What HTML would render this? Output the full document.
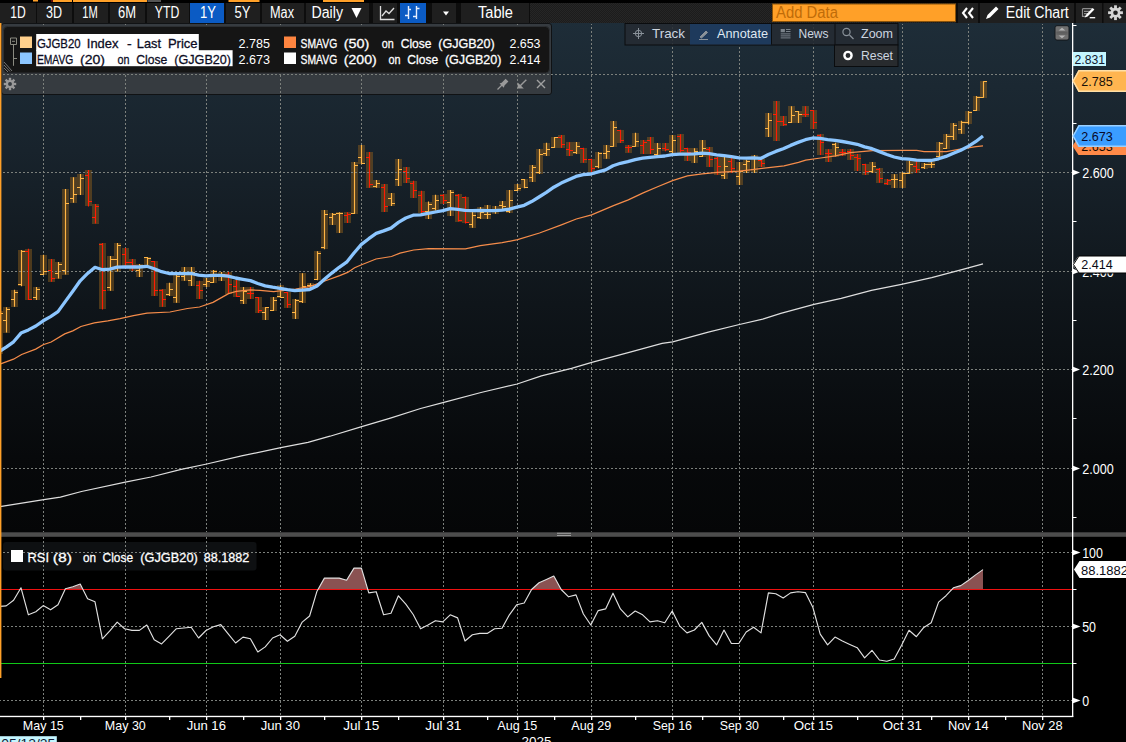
<!DOCTYPE html><html><head><meta charset="utf-8"><title>chart</title><style>html,body{margin:0;padding:0;background:#000;overflow:hidden}svg{display:block}</style></head><body><svg width="1126" height="742" viewBox="0 0 1126 742" font-family="Liberation Sans, sans-serif" shape-rendering="auto">
<defs>
<linearGradient id="bg" x1="0" y1="0" x2="0" y2="1">
<stop offset="0" stop-color="#1e2d38"/><stop offset="0.25" stop-color="#18232c"/><stop offset="0.55" stop-color="#0f151a"/><stop offset="0.85" stop-color="#07090b"/><stop offset="1" stop-color="#050607"/>
</linearGradient>
<pattern id="tex" width="2" height="2" patternUnits="userSpaceOnUse"><rect width="2" height="2" fill="#1c1c1c"/><rect width="1" height="1" fill="#262626"/><rect x="1" y="1" width="1" height="1" fill="#262626"/></pattern>
<clipPath id="cp"><rect x="0" y="23" width="1072" height="511"/></clipPath>
<clipPath id="rp"><rect x="0" y="537" width="1072" height="180"/></clipPath>
</defs>
<rect width="1126" height="742" fill="#000"/>
<rect x="0" y="23" width="1072" height="511" fill="url(#bg)"/>
<rect x="1073" y="23" width="53" height="511" fill="url(#bg)"/>
<rect x="1.5" y="23.5" width="550" height="71" rx="2.5" fill="#363b40" stroke="#101214" stroke-width="1"/>
<g clip-path="url(#cp)">
<rect x="-4" y="311.0" width="7" height="42.5" fill="#8a5c1c" fill-opacity="0.5" shape-rendering="crispEdges"/>
<rect x="3" y="307.2" width="7" height="25.4" fill="#8a5c1c" fill-opacity="0.5" shape-rendering="crispEdges"/>
<rect x="11" y="289.8" width="7" height="17.0" fill="#8a5c1c" fill-opacity="0.5" shape-rendering="crispEdges"/>
<rect x="18" y="250.0" width="7" height="36.3" fill="#8a5c1c" fill-opacity="0.5" shape-rendering="crispEdges"/>
<rect x="25" y="248.8" width="7" height="51.2" fill="#8a5c1c" fill-opacity="0.5" shape-rendering="crispEdges"/>
<rect x="33" y="287.0" width="7" height="13.0" fill="#8a5c1c" fill-opacity="0.5" shape-rendering="crispEdges"/>
<rect x="40" y="254.7" width="7" height="20.3" fill="#8a5c1c" fill-opacity="0.5" shape-rendering="crispEdges"/>
<rect x="48" y="259.0" width="7" height="22.8" fill="#8a5c1c" fill-opacity="0.5" shape-rendering="crispEdges"/>
<rect x="55" y="262.0" width="7" height="16.6" fill="#8a5c1c" fill-opacity="0.5" shape-rendering="crispEdges"/>
<rect x="62" y="189.0" width="7" height="85.6" fill="#8a5c1c" fill-opacity="0.5" shape-rendering="crispEdges"/>
<rect x="70" y="177.2" width="7" height="25.5" fill="#8a5c1c" fill-opacity="0.5" shape-rendering="crispEdges"/>
<rect x="77" y="174.0" width="7" height="21.0" fill="#8a5c1c" fill-opacity="0.5" shape-rendering="crispEdges"/>
<rect x="85" y="170.0" width="7" height="36.4" fill="#8a5c1c" fill-opacity="0.5" shape-rendering="crispEdges"/>
<rect x="92" y="204.0" width="7" height="19.6" fill="#8a5c1c" fill-opacity="0.5" shape-rendering="crispEdges"/>
<rect x="99" y="243.0" width="7" height="66.4" fill="#8a5c1c" fill-opacity="0.5" shape-rendering="crispEdges"/>
<rect x="107" y="256.0" width="7" height="34.8" fill="#8a5c1c" fill-opacity="0.5" shape-rendering="crispEdges"/>
<rect x="114" y="243.0" width="7" height="28.6" fill="#8a5c1c" fill-opacity="0.5" shape-rendering="crispEdges"/>
<rect x="122" y="248.0" width="7" height="18.0" fill="#8a5c1c" fill-opacity="0.5" shape-rendering="crispEdges"/>
<rect x="129" y="259.0" width="7" height="11.7" fill="#8a5c1c" fill-opacity="0.5" shape-rendering="crispEdges"/>
<rect x="136" y="264.0" width="7" height="13.0" fill="#8a5c1c" fill-opacity="0.5" shape-rendering="crispEdges"/>
<rect x="144" y="257.0" width="7" height="10.3" fill="#8a5c1c" fill-opacity="0.5" shape-rendering="crispEdges"/>
<rect x="151" y="261.0" width="7" height="35.0" fill="#8a5c1c" fill-opacity="0.5" shape-rendering="crispEdges"/>
<rect x="159" y="289.2" width="7" height="17.6" fill="#8a5c1c" fill-opacity="0.5" shape-rendering="crispEdges"/>
<rect x="166" y="282.8" width="7" height="13.2" fill="#8a5c1c" fill-opacity="0.5" shape-rendering="crispEdges"/>
<rect x="173" y="275.0" width="7" height="27.8" fill="#8a5c1c" fill-opacity="0.5" shape-rendering="crispEdges"/>
<rect x="181" y="267.0" width="7" height="13.8" fill="#8a5c1c" fill-opacity="0.5" shape-rendering="crispEdges"/>
<rect x="188" y="267.0" width="7" height="19.0" fill="#8a5c1c" fill-opacity="0.5" shape-rendering="crispEdges"/>
<rect x="196" y="280.8" width="7" height="18.2" fill="#8a5c1c" fill-opacity="0.5" shape-rendering="crispEdges"/>
<rect x="203" y="278.0" width="7" height="9.0" fill="#8a5c1c" fill-opacity="0.5" shape-rendering="crispEdges"/>
<rect x="210" y="270.0" width="7" height="13.0" fill="#8a5c1c" fill-opacity="0.5" shape-rendering="crispEdges"/>
<rect x="218" y="272.0" width="7" height="9.0" fill="#8a5c1c" fill-opacity="0.5" shape-rendering="crispEdges"/>
<rect x="225" y="272.0" width="7" height="21.6" fill="#8a5c1c" fill-opacity="0.5" shape-rendering="crispEdges"/>
<rect x="233" y="280.0" width="7" height="17.0" fill="#8a5c1c" fill-opacity="0.5" shape-rendering="crispEdges"/>
<rect x="240" y="287.0" width="7" height="17.0" fill="#8a5c1c" fill-opacity="0.5" shape-rendering="crispEdges"/>
<rect x="247" y="287.0" width="7" height="12.0" fill="#8a5c1c" fill-opacity="0.5" shape-rendering="crispEdges"/>
<rect x="255" y="297.0" width="7" height="16.0" fill="#8a5c1c" fill-opacity="0.5" shape-rendering="crispEdges"/>
<rect x="262" y="307.0" width="7" height="13.0" fill="#8a5c1c" fill-opacity="0.5" shape-rendering="crispEdges"/>
<rect x="270" y="297.0" width="7" height="14.0" fill="#8a5c1c" fill-opacity="0.5" shape-rendering="crispEdges"/>
<rect x="277" y="285.3" width="7" height="12.5" fill="#8a5c1c" fill-opacity="0.5" shape-rendering="crispEdges"/>
<rect x="284" y="292.0" width="7" height="15.8" fill="#8a5c1c" fill-opacity="0.5" shape-rendering="crispEdges"/>
<rect x="292" y="299.0" width="7" height="20.0" fill="#8a5c1c" fill-opacity="0.5" shape-rendering="crispEdges"/>
<rect x="299" y="273.2" width="7" height="29.8" fill="#8a5c1c" fill-opacity="0.5" shape-rendering="crispEdges"/>
<rect x="307" y="283.2" width="7" height="5.3" fill="#8a5c1c" fill-opacity="0.5" shape-rendering="crispEdges"/>
<rect x="314" y="251.2" width="7" height="29.1" fill="#8a5c1c" fill-opacity="0.5" shape-rendering="crispEdges"/>
<rect x="321" y="210.0" width="7" height="39.2" fill="#8a5c1c" fill-opacity="0.5" shape-rendering="crispEdges"/>
<rect x="329" y="212.9" width="7" height="12.2" fill="#8a5c1c" fill-opacity="0.5" shape-rendering="crispEdges"/>
<rect x="336" y="212.2" width="7" height="20.8" fill="#8a5c1c" fill-opacity="0.5" shape-rendering="crispEdges"/>
<rect x="344" y="212.2" width="7" height="10.8" fill="#8a5c1c" fill-opacity="0.5" shape-rendering="crispEdges"/>
<rect x="351" y="162.0" width="7" height="52.0" fill="#8a5c1c" fill-opacity="0.5" shape-rendering="crispEdges"/>
<rect x="358" y="144.9" width="7" height="19.3" fill="#8a5c1c" fill-opacity="0.5" shape-rendering="crispEdges"/>
<rect x="366" y="151.9" width="7" height="35.9" fill="#8a5c1c" fill-opacity="0.5" shape-rendering="crispEdges"/>
<rect x="373" y="180.0" width="7" height="7.8" fill="#8a5c1c" fill-opacity="0.5" shape-rendering="crispEdges"/>
<rect x="381" y="184.0" width="7" height="28.0" fill="#8a5c1c" fill-opacity="0.5" shape-rendering="crispEdges"/>
<rect x="388" y="193.0" width="7" height="12.9" fill="#8a5c1c" fill-opacity="0.5" shape-rendering="crispEdges"/>
<rect x="395" y="158.9" width="7" height="27.1" fill="#8a5c1c" fill-opacity="0.5" shape-rendering="crispEdges"/>
<rect x="403" y="167.1" width="7" height="15.9" fill="#8a5c1c" fill-opacity="0.5" shape-rendering="crispEdges"/>
<rect x="410" y="180.8" width="7" height="17.2" fill="#8a5c1c" fill-opacity="0.5" shape-rendering="crispEdges"/>
<rect x="418" y="190.8" width="7" height="22.4" fill="#8a5c1c" fill-opacity="0.5" shape-rendering="crispEdges"/>
<rect x="425" y="201.5" width="7" height="17.5" fill="#8a5c1c" fill-opacity="0.5" shape-rendering="crispEdges"/>
<rect x="432" y="194.8" width="7" height="15.8" fill="#8a5c1c" fill-opacity="0.5" shape-rendering="crispEdges"/>
<rect x="440" y="194.2" width="7" height="9.8" fill="#8a5c1c" fill-opacity="0.5" shape-rendering="crispEdges"/>
<rect x="447" y="190.0" width="7" height="26.1" fill="#8a5c1c" fill-opacity="0.5" shape-rendering="crispEdges"/>
<rect x="455" y="194.0" width="7" height="27.6" fill="#8a5c1c" fill-opacity="0.5" shape-rendering="crispEdges"/>
<rect x="462" y="196.6" width="7" height="26.8" fill="#8a5c1c" fill-opacity="0.5" shape-rendering="crispEdges"/>
<rect x="469" y="212.0" width="7" height="15.8" fill="#8a5c1c" fill-opacity="0.5" shape-rendering="crispEdges"/>
<rect x="477" y="207.0" width="7" height="12.0" fill="#8a5c1c" fill-opacity="0.5" shape-rendering="crispEdges"/>
<rect x="484" y="205.0" width="7" height="14.0" fill="#8a5c1c" fill-opacity="0.5" shape-rendering="crispEdges"/>
<rect x="492" y="205.9" width="7" height="7.8" fill="#8a5c1c" fill-opacity="0.5" shape-rendering="crispEdges"/>
<rect x="499" y="201.0" width="7" height="9.2" fill="#8a5c1c" fill-opacity="0.5" shape-rendering="crispEdges"/>
<rect x="506" y="190.0" width="7" height="22.9" fill="#8a5c1c" fill-opacity="0.5" shape-rendering="crispEdges"/>
<rect x="514" y="184.0" width="7" height="7.0" fill="#8a5c1c" fill-opacity="0.5" shape-rendering="crispEdges"/>
<rect x="521" y="179.0" width="7" height="9.3" fill="#8a5c1c" fill-opacity="0.5" shape-rendering="crispEdges"/>
<rect x="529" y="165.0" width="7" height="16.9" fill="#8a5c1c" fill-opacity="0.5" shape-rendering="crispEdges"/>
<rect x="536" y="148.9" width="7" height="25.1" fill="#8a5c1c" fill-opacity="0.5" shape-rendering="crispEdges"/>
<rect x="543" y="142.8" width="7" height="13.1" fill="#8a5c1c" fill-opacity="0.5" shape-rendering="crispEdges"/>
<rect x="551" y="137.0" width="7" height="11.0" fill="#8a5c1c" fill-opacity="0.5" shape-rendering="crispEdges"/>
<rect x="558" y="134.9" width="7" height="13.1" fill="#8a5c1c" fill-opacity="0.5" shape-rendering="crispEdges"/>
<rect x="566" y="142.3" width="7" height="13.6" fill="#8a5c1c" fill-opacity="0.5" shape-rendering="crispEdges"/>
<rect x="573" y="142.0" width="7" height="12.1" fill="#8a5c1c" fill-opacity="0.5" shape-rendering="crispEdges"/>
<rect x="580" y="147.8" width="7" height="15.0" fill="#8a5c1c" fill-opacity="0.5" shape-rendering="crispEdges"/>
<rect x="588" y="158.8" width="7" height="15.7" fill="#8a5c1c" fill-opacity="0.5" shape-rendering="crispEdges"/>
<rect x="595" y="152.0" width="7" height="16.3" fill="#8a5c1c" fill-opacity="0.5" shape-rendering="crispEdges"/>
<rect x="603" y="145.0" width="7" height="13.7" fill="#8a5c1c" fill-opacity="0.5" shape-rendering="crispEdges"/>
<rect x="610" y="121.0" width="7" height="25.8" fill="#8a5c1c" fill-opacity="0.5" shape-rendering="crispEdges"/>
<rect x="617" y="129.8" width="7" height="13.1" fill="#8a5c1c" fill-opacity="0.5" shape-rendering="crispEdges"/>
<rect x="625" y="145.0" width="7" height="7.6" fill="#8a5c1c" fill-opacity="0.5" shape-rendering="crispEdges"/>
<rect x="632" y="132.8" width="7" height="14.0" fill="#8a5c1c" fill-opacity="0.5" shape-rendering="crispEdges"/>
<rect x="640" y="140.0" width="7" height="14.0" fill="#8a5c1c" fill-opacity="0.5" shape-rendering="crispEdges"/>
<rect x="647" y="137.1" width="7" height="16.9" fill="#8a5c1c" fill-opacity="0.5" shape-rendering="crispEdges"/>
<rect x="654" y="142.9" width="7" height="12.8" fill="#8a5c1c" fill-opacity="0.5" shape-rendering="crispEdges"/>
<rect x="662" y="142.9" width="7" height="8.4" fill="#8a5c1c" fill-opacity="0.5" shape-rendering="crispEdges"/>
<rect x="669" y="135.0" width="7" height="18.1" fill="#8a5c1c" fill-opacity="0.5" shape-rendering="crispEdges"/>
<rect x="677" y="134.2" width="7" height="18.4" fill="#8a5c1c" fill-opacity="0.5" shape-rendering="crispEdges"/>
<rect x="684" y="147.7" width="7" height="13.3" fill="#8a5c1c" fill-opacity="0.5" shape-rendering="crispEdges"/>
<rect x="691" y="148.2" width="7" height="14.9" fill="#8a5c1c" fill-opacity="0.5" shape-rendering="crispEdges"/>
<rect x="699" y="140.0" width="7" height="17.0" fill="#8a5c1c" fill-opacity="0.5" shape-rendering="crispEdges"/>
<rect x="706" y="147.0" width="7" height="20.0" fill="#8a5c1c" fill-opacity="0.5" shape-rendering="crispEdges"/>
<rect x="714" y="157.0" width="7" height="17.8" fill="#8a5c1c" fill-opacity="0.5" shape-rendering="crispEdges"/>
<rect x="721" y="157.0" width="7" height="22.0" fill="#8a5c1c" fill-opacity="0.5" shape-rendering="crispEdges"/>
<rect x="728" y="158.0" width="7" height="14.9" fill="#8a5c1c" fill-opacity="0.5" shape-rendering="crispEdges"/>
<rect x="736" y="162.0" width="7" height="23.1" fill="#8a5c1c" fill-opacity="0.5" shape-rendering="crispEdges"/>
<rect x="743" y="159.7" width="7" height="13.2" fill="#8a5c1c" fill-opacity="0.5" shape-rendering="crispEdges"/>
<rect x="751" y="155.0" width="7" height="17.9" fill="#8a5c1c" fill-opacity="0.5" shape-rendering="crispEdges"/>
<rect x="758" y="159.2" width="7" height="7.9" fill="#8a5c1c" fill-opacity="0.5" shape-rendering="crispEdges"/>
<rect x="765" y="112.9" width="7" height="24.1" fill="#8a5c1c" fill-opacity="0.5" shape-rendering="crispEdges"/>
<rect x="773" y="101.0" width="7" height="40.0" fill="#8a5c1c" fill-opacity="0.5" shape-rendering="crispEdges"/>
<rect x="780" y="115.9" width="7" height="10.0" fill="#8a5c1c" fill-opacity="0.5" shape-rendering="crispEdges"/>
<rect x="788" y="106.3" width="7" height="16.6" fill="#8a5c1c" fill-opacity="0.5" shape-rendering="crispEdges"/>
<rect x="795" y="111.0" width="7" height="11.9" fill="#8a5c1c" fill-opacity="0.5" shape-rendering="crispEdges"/>
<rect x="802" y="106.3" width="7" height="10.8" fill="#8a5c1c" fill-opacity="0.5" shape-rendering="crispEdges"/>
<rect x="810" y="110.1" width="7" height="18.9" fill="#8a5c1c" fill-opacity="0.5" shape-rendering="crispEdges"/>
<rect x="817" y="134.3" width="7" height="20.7" fill="#8a5c1c" fill-opacity="0.5" shape-rendering="crispEdges"/>
<rect x="825" y="149.2" width="7" height="12.8" fill="#8a5c1c" fill-opacity="0.5" shape-rendering="crispEdges"/>
<rect x="832" y="142.8" width="7" height="13.7" fill="#8a5c1c" fill-opacity="0.5" shape-rendering="crispEdges"/>
<rect x="839" y="148.9" width="7" height="7.0" fill="#8a5c1c" fill-opacity="0.5" shape-rendering="crispEdges"/>
<rect x="847" y="148.9" width="7" height="10.8" fill="#8a5c1c" fill-opacity="0.5" shape-rendering="crispEdges"/>
<rect x="854" y="154.1" width="7" height="17.0" fill="#8a5c1c" fill-opacity="0.5" shape-rendering="crispEdges"/>
<rect x="862" y="163.7" width="7" height="11.4" fill="#8a5c1c" fill-opacity="0.5" shape-rendering="crispEdges"/>
<rect x="869" y="162.0" width="7" height="11.0" fill="#8a5c1c" fill-opacity="0.5" shape-rendering="crispEdges"/>
<rect x="876" y="168.1" width="7" height="14.6" fill="#8a5c1c" fill-opacity="0.5" shape-rendering="crispEdges"/>
<rect x="884" y="179.0" width="7" height="6.1" fill="#8a5c1c" fill-opacity="0.5" shape-rendering="crispEdges"/>
<rect x="891" y="174.3" width="7" height="13.6" fill="#8a5c1c" fill-opacity="0.5" shape-rendering="crispEdges"/>
<rect x="899" y="172.2" width="7" height="15.7" fill="#8a5c1c" fill-opacity="0.5" shape-rendering="crispEdges"/>
<rect x="906" y="160.8" width="7" height="12.9" fill="#8a5c1c" fill-opacity="0.5" shape-rendering="crispEdges"/>
<rect x="913" y="161.1" width="7" height="11.9" fill="#8a5c1c" fill-opacity="0.5" shape-rendering="crispEdges"/>
<rect x="921" y="162.9" width="7" height="6.1" fill="#8a5c1c" fill-opacity="0.5" shape-rendering="crispEdges"/>
<rect x="928" y="161.1" width="7" height="7.0" fill="#8a5c1c" fill-opacity="0.5" shape-rendering="crispEdges"/>
<rect x="936" y="141.9" width="7" height="15.1" fill="#8a5c1c" fill-opacity="0.5" shape-rendering="crispEdges"/>
<rect x="943" y="134.0" width="7" height="14.9" fill="#8a5c1c" fill-opacity="0.5" shape-rendering="crispEdges"/>
<rect x="950" y="123.0" width="7" height="17.0" fill="#8a5c1c" fill-opacity="0.5" shape-rendering="crispEdges"/>
<rect x="958" y="120.7" width="7" height="13.1" fill="#8a5c1c" fill-opacity="0.5" shape-rendering="crispEdges"/>
<rect x="965" y="111.1" width="7" height="13.1" fill="#8a5c1c" fill-opacity="0.5" shape-rendering="crispEdges"/>
<rect x="973" y="96.0" width="7" height="15.1" fill="#8a5c1c" fill-opacity="0.5" shape-rendering="crispEdges"/>
<rect x="980" y="81.2" width="7" height="16.6" fill="#8a5c1c" fill-opacity="0.5" shape-rendering="crispEdges"/>
</g>
<rect x="3" y="542" width="253.5" height="28.5" rx="3" fill="#0e1012"/>
<line x1="43.5" y1="24" x2="43.5" y2="532" stroke-dashoffset="1" stroke="#7c807c" stroke-width="1" stroke-dasharray="2 2" shape-rendering="crispEdges"/>
<line x1="43.5" y1="537" x2="43.5" y2="716" stroke-dashoffset="0" stroke="#7c807c" stroke-width="1" stroke-dasharray="2 2" shape-rendering="crispEdges"/>
<line x1="125.5" y1="24" x2="125.5" y2="532" stroke-dashoffset="1" stroke="#7c807c" stroke-width="1" stroke-dasharray="2 2" shape-rendering="crispEdges"/>
<line x1="125.5" y1="537" x2="125.5" y2="716" stroke-dashoffset="0" stroke="#7c807c" stroke-width="1" stroke-dasharray="2 2" shape-rendering="crispEdges"/>
<line x1="206.5" y1="24" x2="206.5" y2="532" stroke-dashoffset="1" stroke="#7c807c" stroke-width="1" stroke-dasharray="2 2" shape-rendering="crispEdges"/>
<line x1="206.5" y1="537" x2="206.5" y2="716" stroke-dashoffset="0" stroke="#7c807c" stroke-width="1" stroke-dasharray="2 2" shape-rendering="crispEdges"/>
<line x1="280.5" y1="24" x2="280.5" y2="532" stroke-dashoffset="1" stroke="#7c807c" stroke-width="1" stroke-dasharray="2 2" shape-rendering="crispEdges"/>
<line x1="280.5" y1="537" x2="280.5" y2="716" stroke-dashoffset="0" stroke="#7c807c" stroke-width="1" stroke-dasharray="2 2" shape-rendering="crispEdges"/>
<line x1="361.5" y1="24" x2="361.5" y2="532" stroke-dashoffset="1" stroke="#7c807c" stroke-width="1" stroke-dasharray="2 2" shape-rendering="crispEdges"/>
<line x1="361.5" y1="537" x2="361.5" y2="716" stroke-dashoffset="0" stroke="#7c807c" stroke-width="1" stroke-dasharray="2 2" shape-rendering="crispEdges"/>
<line x1="443.5" y1="24" x2="443.5" y2="532" stroke-dashoffset="1" stroke="#7c807c" stroke-width="1" stroke-dasharray="2 2" shape-rendering="crispEdges"/>
<line x1="443.5" y1="537" x2="443.5" y2="716" stroke-dashoffset="0" stroke="#7c807c" stroke-width="1" stroke-dasharray="2 2" shape-rendering="crispEdges"/>
<line x1="517.5" y1="24" x2="517.5" y2="532" stroke-dashoffset="1" stroke="#7c807c" stroke-width="1" stroke-dasharray="2 2" shape-rendering="crispEdges"/>
<line x1="517.5" y1="537" x2="517.5" y2="716" stroke-dashoffset="0" stroke="#7c807c" stroke-width="1" stroke-dasharray="2 2" shape-rendering="crispEdges"/>
<line x1="591.5" y1="24" x2="591.5" y2="532" stroke-dashoffset="1" stroke="#7c807c" stroke-width="1" stroke-dasharray="2 2" shape-rendering="crispEdges"/>
<line x1="591.5" y1="537" x2="591.5" y2="716" stroke-dashoffset="0" stroke="#7c807c" stroke-width="1" stroke-dasharray="2 2" shape-rendering="crispEdges"/>
<line x1="672.5" y1="24" x2="672.5" y2="532" stroke-dashoffset="1" stroke="#7c807c" stroke-width="1" stroke-dasharray="2 2" shape-rendering="crispEdges"/>
<line x1="672.5" y1="537" x2="672.5" y2="716" stroke-dashoffset="0" stroke="#7c807c" stroke-width="1" stroke-dasharray="2 2" shape-rendering="crispEdges"/>
<line x1="739.5" y1="24" x2="739.5" y2="532" stroke-dashoffset="1" stroke="#7c807c" stroke-width="1" stroke-dasharray="2 2" shape-rendering="crispEdges"/>
<line x1="739.5" y1="537" x2="739.5" y2="716" stroke-dashoffset="0" stroke="#7c807c" stroke-width="1" stroke-dasharray="2 2" shape-rendering="crispEdges"/>
<line x1="813.5" y1="24" x2="813.5" y2="532" stroke-dashoffset="1" stroke="#7c807c" stroke-width="1" stroke-dasharray="2 2" shape-rendering="crispEdges"/>
<line x1="813.5" y1="537" x2="813.5" y2="716" stroke-dashoffset="0" stroke="#7c807c" stroke-width="1" stroke-dasharray="2 2" shape-rendering="crispEdges"/>
<line x1="902.5" y1="24" x2="902.5" y2="532" stroke-dashoffset="1" stroke="#7c807c" stroke-width="1" stroke-dasharray="2 2" shape-rendering="crispEdges"/>
<line x1="902.5" y1="537" x2="902.5" y2="716" stroke-dashoffset="0" stroke="#7c807c" stroke-width="1" stroke-dasharray="2 2" shape-rendering="crispEdges"/>
<line x1="968.5" y1="24" x2="968.5" y2="532" stroke-dashoffset="1" stroke="#7c807c" stroke-width="1" stroke-dasharray="2 2" shape-rendering="crispEdges"/>
<line x1="968.5" y1="537" x2="968.5" y2="716" stroke-dashoffset="0" stroke="#7c807c" stroke-width="1" stroke-dasharray="2 2" shape-rendering="crispEdges"/>
<line x1="1042.5" y1="24" x2="1042.5" y2="532" stroke-dashoffset="1" stroke="#7c807c" stroke-width="1" stroke-dasharray="2 2" shape-rendering="crispEdges"/>
<line x1="1042.5" y1="537" x2="1042.5" y2="716" stroke-dashoffset="0" stroke="#7c807c" stroke-width="1" stroke-dasharray="2 2" shape-rendering="crispEdges"/>
<line x1="0" y1="74.5" x2="1072" y2="74.5" stroke-dashoffset="1" stroke="#7c807c" stroke-width="1" stroke-dasharray="2 2" shape-rendering="crispEdges"/>
<line x1="0" y1="172.5" x2="1072" y2="172.5" stroke-dashoffset="1" stroke="#7c807c" stroke-width="1" stroke-dasharray="2 2" shape-rendering="crispEdges"/>
<line x1="0" y1="271.5" x2="1072" y2="271.5" stroke-dashoffset="1" stroke="#7c807c" stroke-width="1" stroke-dasharray="2 2" shape-rendering="crispEdges"/>
<line x1="0" y1="369.5" x2="1072" y2="369.5" stroke-dashoffset="1" stroke="#7c807c" stroke-width="1" stroke-dasharray="2 2" shape-rendering="crispEdges"/>
<line x1="0" y1="468.5" x2="1072" y2="468.5" stroke-dashoffset="1" stroke="#7c807c" stroke-width="1" stroke-dasharray="2 2" shape-rendering="crispEdges"/>
<line x1="0" y1="552.5" x2="1072" y2="552.5" stroke-dashoffset="1" stroke="#7c807c" stroke-width="1" stroke-dasharray="2 2" shape-rendering="crispEdges"/>
<line x1="0" y1="626.5" x2="1072" y2="626.5" stroke-dashoffset="1" stroke="#7c807c" stroke-width="1" stroke-dasharray="2 2" shape-rendering="crispEdges"/>
<line x1="0" y1="700.5" x2="1072" y2="700.5" stroke-dashoffset="1" stroke="#7c807c" stroke-width="1" stroke-dasharray="2 2" shape-rendering="crispEdges"/>
<g clip-path="url(#cp)">
<path d="M0.0,506.8 L1.5,506.3 L43.8,499.6 L60.4,497.2 L81.5,491.5 L125.3,482.1 L151.0,477.0 L181.2,469.4 L206.8,464.0 L241.5,455.9 L280.8,447.7 L308.0,442.3 L330.0,436.2 L361.7,426.6 L390.4,418.1 L420.6,408.5 L443.8,402.4 L481.0,392.5 L517.2,384.0 L541.4,375.9 L571.5,368.3 L591.8,362.3 L631.9,351.7 L662.1,343.4 L672.7,341.8 L708.3,332.1 L739.4,324.5 L762.7,319.1 L780.8,313.4 L814.0,304.3 L841.2,298.3 L871.4,290.4 L901.5,284.4 L931.7,277.7 L961.9,269.6 L983.0,263.8" fill="none" stroke="#dedede" stroke-width="1.2"/>
<path d="M-0.5,311.0 V353.5 M-4,335.5 H-0.5 M-0.5,313.5 H3" stroke="#ffb545" stroke-width="1.15" fill="none"/>
<path d="M6.5,307.2 V332.6 M3,320.5 H6.5 M6.5,309.5 H10" stroke="#ffb545" stroke-width="1.15" fill="none"/>
<path d="M14.5,289.8 V306.8 M11,299.5 H14.5 M14.5,292.5 H18" stroke="#ffb545" stroke-width="1.15" fill="none"/>
<path d="M21.5,250.0 V286.3 M18,284.5 H21.5 M21.5,251.5 H25" stroke="#ffb545" stroke-width="1.15" fill="none"/>
<path d="M28.5,248.8 V300.0 M25,251.5 H28.5 M28.5,299.5 H32" stroke="#ff1c04" stroke-width="1.15" fill="none"/>
<path d="M36.5,287.0 V300.0 M33,297.5 H36.5 M36.5,289.5 H40" stroke="#ffb545" stroke-width="1.15" fill="none"/>
<path d="M43.5,254.7 V275.0 M40,274.5 H43.5 M43.5,271.5 H47" stroke="#ffb545" stroke-width="1.15" fill="none"/>
<path d="M51.5,259.0 V281.8 M48,270.5 H51.5 M51.5,278.5 H55" stroke="#ff1c04" stroke-width="1.15" fill="none"/>
<path d="M58.5,262.0 V278.6 M55,273.5 H58.5 M58.5,264.5 H62" stroke="#ffb545" stroke-width="1.15" fill="none"/>
<path d="M65.5,189.0 V274.6 M62,270.5 H65.5 M65.5,203.5 H69" stroke="#ffb545" stroke-width="1.15" fill="none"/>
<path d="M73.5,177.2 V202.7 M70,198.5 H73.5 M73.5,194.5 H77" stroke="#ffb545" stroke-width="1.15" fill="none"/>
<path d="M80.5,174.0 V195.0 M77,187.5 H80.5 M80.5,178.5 H84" stroke="#ffb545" stroke-width="1.15" fill="none"/>
<path d="M88.5,170.0 V206.4 M85,175.5 H88.5 M88.5,201.5 H92" stroke="#ff1c04" stroke-width="1.15" fill="none"/>
<path d="M95.5,204.0 V223.6 M92,217.5 H95.5 M95.5,206.5 H99" stroke="#ff1c04" stroke-width="1.15" fill="none"/>
<path d="M102.5,243.0 V309.4 M99,244.5 H102.5 M102.5,290.5 H106" stroke="#ff1c04" stroke-width="1.15" fill="none"/>
<path d="M110.5,256.0 V290.8 M107,287.5 H110.5 M110.5,259.5 H114" stroke="#ffb545" stroke-width="1.15" fill="none"/>
<path d="M117.5,243.0 V271.6 M114,259.5 H117.5 M117.5,245.5 H121" stroke="#ffb545" stroke-width="1.15" fill="none"/>
<path d="M125.5,248.0 V266.0 M122,254.5 H125.5 M125.5,262.5 H129" stroke="#ff1c04" stroke-width="1.15" fill="none"/>
<path d="M132.5,259.0 V270.7 M129,262.5 H132.5 M132.5,265.5 H136" stroke="#ff1c04" stroke-width="1.15" fill="none"/>
<path d="M139.5,264.0 V277.0 M136,270.5 H139.5 M139.5,265.5 H143" stroke="#ffb545" stroke-width="1.15" fill="none"/>
<path d="M147.5,257.0 V267.3 M144,257.5 H147.5 M147.5,258.5 H151" stroke="#ffb545" stroke-width="1.15" fill="none"/>
<path d="M154.5,261.0 V296.0 M151,261.5 H154.5 M154.5,290.5 H158" stroke="#ff1c04" stroke-width="1.15" fill="none"/>
<path d="M162.5,289.2 V306.8 M159,290.5 H162.5 M162.5,299.5 H166" stroke="#ff1c04" stroke-width="1.15" fill="none"/>
<path d="M169.5,282.8 V296.0 M166,294.5 H169.5 M169.5,289.5 H173" stroke="#ffb545" stroke-width="1.15" fill="none"/>
<path d="M176.5,275.0 V302.8 M173,297.5 H176.5 M176.5,276.5 H180" stroke="#ffb545" stroke-width="1.15" fill="none"/>
<path d="M184.5,267.0 V280.8 M181,276.5 H184.5 M184.5,274.5 H188" stroke="#ffb545" stroke-width="1.15" fill="none"/>
<path d="M191.5,267.0 V286.0 M188,280.5 H191.5 M191.5,272.5 H195" stroke="#ffb545" stroke-width="1.15" fill="none"/>
<path d="M199.5,280.8 V299.0 M196,285.5 H199.5 M199.5,290.5 H203" stroke="#ff1c04" stroke-width="1.15" fill="none"/>
<path d="M206.5,278.0 V287.0 M203,284.5 H206.5 M206.5,281.5 H210" stroke="#ffb545" stroke-width="1.15" fill="none"/>
<path d="M213.5,270.0 V283.0 M210,282.5 H213.5 M213.5,271.5 H217" stroke="#ffb545" stroke-width="1.15" fill="none"/>
<path d="M221.5,272.0 V281.0 M218,276.5 H221.5 M221.5,274.5 H225" stroke="#ffb545" stroke-width="1.15" fill="none"/>
<path d="M228.5,272.0 V293.6 M225,274.5 H228.5 M228.5,284.5 H232" stroke="#ff1c04" stroke-width="1.15" fill="none"/>
<path d="M236.5,280.0 V297.0 M233,286.5 H236.5 M236.5,296.5 H240" stroke="#ff1c04" stroke-width="1.15" fill="none"/>
<path d="M243.5,287.0 V304.0 M240,300.5 H243.5 M243.5,291.5 H247" stroke="#ffb545" stroke-width="1.15" fill="none"/>
<path d="M250.5,287.0 V299.0 M247,293.5 H250.5 M250.5,293.5 H254" stroke="#ff1c04" stroke-width="1.15" fill="none"/>
<path d="M258.5,297.0 V313.0 M255,297.5 H258.5 M258.5,310.5 H262" stroke="#ff1c04" stroke-width="1.15" fill="none"/>
<path d="M265.5,307.0 V320.0 M262,312.5 H265.5 M265.5,307.5 H269" stroke="#ffb545" stroke-width="1.15" fill="none"/>
<path d="M273.5,297.0 V311.0 M270,310.5 H273.5 M273.5,300.5 H277" stroke="#ffb545" stroke-width="1.15" fill="none"/>
<path d="M280.5,285.3 V297.8 M277,296.5 H280.5 M280.5,297.5 H284" stroke="#ffb545" stroke-width="1.15" fill="none"/>
<path d="M287.5,292.0 V307.8 M284,292.5 H287.5 M287.5,304.5 H291" stroke="#ff1c04" stroke-width="1.15" fill="none"/>
<path d="M295.5,299.0 V319.0 M292,312.5 H295.5 M295.5,300.5 H299" stroke="#ffb545" stroke-width="1.15" fill="none"/>
<path d="M302.5,273.2 V303.0 M299,301.5 H302.5 M302.5,286.5 H306" stroke="#ffb545" stroke-width="1.15" fill="none"/>
<path d="M310.5,283.2 V288.5 M307,285.5 H310.5 M310.5,285.5 H314" stroke="#ffb545" stroke-width="1.15" fill="none"/>
<path d="M317.5,251.2 V280.3 M314,279.5 H317.5 M317.5,253.5 H321" stroke="#ffb545" stroke-width="1.15" fill="none"/>
<path d="M324.5,210.0 V249.2 M321,247.5 H324.5 M324.5,214.5 H328" stroke="#ffb545" stroke-width="1.15" fill="none"/>
<path d="M332.5,212.9 V225.1 M329,217.5 H332.5 M332.5,214.5 H336" stroke="#ffb545" stroke-width="1.15" fill="none"/>
<path d="M339.5,212.2 V233.0 M336,213.5 H339.5 M339.5,213.5 H343" stroke="#ffb545" stroke-width="1.15" fill="none"/>
<path d="M347.5,212.2 V223.0 M344,215.5 H347.5 M347.5,214.5 H351" stroke="#ff1c04" stroke-width="1.15" fill="none"/>
<path d="M354.5,162.0 V214.0 M351,213.5 H354.5 M354.5,165.5 H358" stroke="#ffb545" stroke-width="1.15" fill="none"/>
<path d="M361.5,144.9 V164.2 M358,157.5 H361.5 M361.5,163.5 H365" stroke="#ffb545" stroke-width="1.15" fill="none"/>
<path d="M369.5,151.9 V187.8 M366,157.5 H369.5 M369.5,184.5 H373" stroke="#ff1c04" stroke-width="1.15" fill="none"/>
<path d="M376.5,180.0 V187.8 M373,186.5 H376.5 M376.5,183.5 H380" stroke="#ffb545" stroke-width="1.15" fill="none"/>
<path d="M384.5,184.0 V212.0 M381,187.5 H384.5 M384.5,206.5 H388" stroke="#ff1c04" stroke-width="1.15" fill="none"/>
<path d="M391.5,193.0 V205.9 M388,198.5 H391.5 M391.5,203.5 H395" stroke="#ffb545" stroke-width="1.15" fill="none"/>
<path d="M398.5,158.9 V186.0 M395,179.5 H398.5 M398.5,169.5 H402" stroke="#ffb545" stroke-width="1.15" fill="none"/>
<path d="M406.5,167.1 V183.0 M403,171.5 H406.5 M406.5,178.5 H410" stroke="#ff1c04" stroke-width="1.15" fill="none"/>
<path d="M413.5,180.8 V198.0 M410,183.5 H413.5 M413.5,190.5 H417" stroke="#ff1c04" stroke-width="1.15" fill="none"/>
<path d="M421.5,190.8 V213.2 M418,195.5 H421.5 M421.5,211.5 H425" stroke="#ff1c04" stroke-width="1.15" fill="none"/>
<path d="M428.5,201.5 V219.0 M425,211.5 H428.5 M428.5,204.5 H432" stroke="#ffb545" stroke-width="1.15" fill="none"/>
<path d="M435.5,194.8 V210.6 M432,208.5 H435.5 M435.5,200.5 H439" stroke="#ffb545" stroke-width="1.15" fill="none"/>
<path d="M443.5,194.2 V204.0 M440,195.5 H443.5 M443.5,200.5 H447" stroke="#ff1c04" stroke-width="1.15" fill="none"/>
<path d="M450.5,190.0 V216.1 M447,202.5 H450.5 M450.5,192.5 H454" stroke="#ffb545" stroke-width="1.15" fill="none"/>
<path d="M458.5,194.0 V221.6 M455,195.5 H458.5 M458.5,220.5 H462" stroke="#ff1c04" stroke-width="1.15" fill="none"/>
<path d="M465.5,196.6 V223.4 M462,197.5 H465.5 M465.5,222.5 H469" stroke="#ff1c04" stroke-width="1.15" fill="none"/>
<path d="M472.5,212.0 V227.8 M469,224.5 H472.5 M472.5,215.5 H476" stroke="#ffb545" stroke-width="1.15" fill="none"/>
<path d="M480.5,207.0 V219.0 M477,217.5 H480.5 M480.5,212.5 H484" stroke="#ffb545" stroke-width="1.15" fill="none"/>
<path d="M487.5,205.0 V219.0 M484,214.5 H487.5 M487.5,214.5 H491" stroke="#ffb545" stroke-width="1.15" fill="none"/>
<path d="M495.5,205.9 V213.7 M492,209.5 H495.5 M495.5,211.5 H499" stroke="#ffb545" stroke-width="1.15" fill="none"/>
<path d="M502.5,201.0 V210.2 M499,205.5 H502.5 M502.5,206.5 H506" stroke="#ffb545" stroke-width="1.15" fill="none"/>
<path d="M509.5,190.0 V212.9 M506,211.5 H509.5 M509.5,200.5 H513" stroke="#ffb545" stroke-width="1.15" fill="none"/>
<path d="M517.5,184.0 V191.0 M514,190.5 H517.5 M517.5,188.5 H521" stroke="#ffb545" stroke-width="1.15" fill="none"/>
<path d="M524.5,179.0 V188.3 M521,179.5 H524.5 M524.5,187.5 H528" stroke="#ffb545" stroke-width="1.15" fill="none"/>
<path d="M532.5,165.0 V181.9 M529,177.5 H532.5 M532.5,167.5 H536" stroke="#ffb545" stroke-width="1.15" fill="none"/>
<path d="M539.5,148.9 V174.0 M536,172.5 H539.5 M539.5,154.5 H543" stroke="#ffb545" stroke-width="1.15" fill="none"/>
<path d="M546.5,142.8 V155.9 M543,153.5 H546.5 M546.5,149.5 H550" stroke="#ffb545" stroke-width="1.15" fill="none"/>
<path d="M554.5,137.0 V148.0 M551,147.5 H554.5 M554.5,137.5 H558" stroke="#ffb545" stroke-width="1.15" fill="none"/>
<path d="M561.5,134.9 V148.0 M558,137.5 H561.5 M561.5,144.5 H565" stroke="#ff1c04" stroke-width="1.15" fill="none"/>
<path d="M569.5,142.3 V155.9 M566,149.5 H569.5 M569.5,150.5 H573" stroke="#ff1c04" stroke-width="1.15" fill="none"/>
<path d="M576.5,142.0 V154.1 M573,152.5 H576.5 M576.5,146.5 H580" stroke="#ffb545" stroke-width="1.15" fill="none"/>
<path d="M583.5,147.8 V162.8 M580,148.5 H583.5 M583.5,159.5 H587" stroke="#ff1c04" stroke-width="1.15" fill="none"/>
<path d="M591.5,158.8 V174.5 M588,159.5 H591.5 M591.5,168.5 H595" stroke="#ff1c04" stroke-width="1.15" fill="none"/>
<path d="M598.5,152.0 V168.3 M595,166.5 H598.5 M598.5,153.5 H602" stroke="#ffb545" stroke-width="1.15" fill="none"/>
<path d="M606.5,145.0 V158.7 M603,153.5 H606.5 M606.5,151.5 H610" stroke="#ffb545" stroke-width="1.15" fill="none"/>
<path d="M613.5,121.0 V146.8 M610,146.5 H613.5 M613.5,127.5 H617" stroke="#ffb545" stroke-width="1.15" fill="none"/>
<path d="M620.5,129.8 V142.9 M617,130.5 H620.5 M620.5,140.5 H624" stroke="#ff1c04" stroke-width="1.15" fill="none"/>
<path d="M628.5,145.0 V152.6 M625,147.5 H628.5 M628.5,147.5 H632" stroke="#ff1c04" stroke-width="1.15" fill="none"/>
<path d="M635.5,132.8 V146.8 M632,146.5 H635.5 M635.5,141.5 H639" stroke="#ffb545" stroke-width="1.15" fill="none"/>
<path d="M643.5,140.0 V154.0 M640,145.5 H643.5 M643.5,142.5 H647" stroke="#ff1c04" stroke-width="1.15" fill="none"/>
<path d="M650.5,137.1 V154.0 M647,140.5 H650.5 M650.5,149.5 H654" stroke="#ff1c04" stroke-width="1.15" fill="none"/>
<path d="M657.5,142.9 V155.7 M654,154.5 H657.5 M657.5,148.5 H661" stroke="#ffb545" stroke-width="1.15" fill="none"/>
<path d="M665.5,142.9 V151.3 M662,148.5 H665.5 M665.5,149.5 H669" stroke="#ff1c04" stroke-width="1.15" fill="none"/>
<path d="M672.5,135.0 V153.1 M669,151.5 H672.5 M672.5,140.5 H676" stroke="#ffb545" stroke-width="1.15" fill="none"/>
<path d="M680.5,134.2 V152.6 M677,136.5 H680.5 M680.5,150.5 H684" stroke="#ff1c04" stroke-width="1.15" fill="none"/>
<path d="M687.5,147.7 V161.0 M684,148.5 H687.5 M687.5,152.5 H691" stroke="#ff1c04" stroke-width="1.15" fill="none"/>
<path d="M694.5,148.2 V163.1 M691,153.5 H694.5 M694.5,151.5 H698" stroke="#ffb545" stroke-width="1.15" fill="none"/>
<path d="M702.5,140.0 V157.0 M699,156.5 H702.5 M702.5,148.5 H706" stroke="#ffb545" stroke-width="1.15" fill="none"/>
<path d="M709.5,147.0 V167.0 M706,149.5 H709.5 M709.5,159.5 H713" stroke="#ff1c04" stroke-width="1.15" fill="none"/>
<path d="M717.5,157.0 V174.8 M714,158.5 H717.5 M717.5,166.5 H721" stroke="#ff1c04" stroke-width="1.15" fill="none"/>
<path d="M724.5,157.0 V179.0 M721,175.5 H724.5 M724.5,166.5 H728" stroke="#ffb545" stroke-width="1.15" fill="none"/>
<path d="M731.5,158.0 V172.9 M728,161.5 H731.5 M731.5,168.5 H735" stroke="#ff1c04" stroke-width="1.15" fill="none"/>
<path d="M739.5,162.0 V185.1 M736,176.5 H739.5 M739.5,171.5 H743" stroke="#ffb545" stroke-width="1.15" fill="none"/>
<path d="M746.5,159.7 V172.9 M743,164.5 H746.5 M746.5,161.5 H750" stroke="#ffb545" stroke-width="1.15" fill="none"/>
<path d="M754.5,155.0 V172.9 M751,169.5 H754.5 M754.5,158.5 H758" stroke="#ffb545" stroke-width="1.15" fill="none"/>
<path d="M761.5,159.2 V167.1 M758,160.5 H761.5 M761.5,163.5 H765" stroke="#ff1c04" stroke-width="1.15" fill="none"/>
<path d="M768.5,112.9 V137.0 M765,128.5 H768.5 M768.5,120.5 H772" stroke="#ffb545" stroke-width="1.15" fill="none"/>
<path d="M776.5,101.0 V141.0 M773,114.5 H776.5 M776.5,121.5 H780" stroke="#ff1c04" stroke-width="1.15" fill="none"/>
<path d="M783.5,115.9 V125.9 M780,121.5 H783.5 M783.5,124.5 H787" stroke="#ff1c04" stroke-width="1.15" fill="none"/>
<path d="M791.5,106.3 V122.9 M788,122.5 H791.5 M791.5,115.5 H795" stroke="#ffb545" stroke-width="1.15" fill="none"/>
<path d="M798.5,111.0 V122.9 M795,111.5 H798.5 M798.5,114.5 H802" stroke="#ffb545" stroke-width="1.15" fill="none"/>
<path d="M805.5,106.3 V117.1 M802,114.5 H805.5 M805.5,114.5 H809" stroke="#ff1c04" stroke-width="1.15" fill="none"/>
<path d="M813.5,110.1 V129.0 M810,110.5 H813.5 M813.5,122.5 H817" stroke="#ff1c04" stroke-width="1.15" fill="none"/>
<path d="M820.5,134.3 V155.0 M817,135.5 H820.5 M820.5,142.5 H824" stroke="#ff1c04" stroke-width="1.15" fill="none"/>
<path d="M828.5,149.2 V162.0 M825,153.5 H828.5 M828.5,153.5 H832" stroke="#ff1c04" stroke-width="1.15" fill="none"/>
<path d="M835.5,142.8 V156.5 M832,144.5 H835.5 M835.5,147.5 H839" stroke="#ffb545" stroke-width="1.15" fill="none"/>
<path d="M842.5,148.9 V155.9 M839,152.5 H842.5 M842.5,152.5 H846" stroke="#ff1c04" stroke-width="1.15" fill="none"/>
<path d="M850.5,148.9 V159.7 M847,151.5 H850.5 M850.5,155.5 H854" stroke="#ff1c04" stroke-width="1.15" fill="none"/>
<path d="M857.5,154.1 V171.1 M854,157.5 H857.5 M857.5,158.5 H861" stroke="#ff1c04" stroke-width="1.15" fill="none"/>
<path d="M865.5,163.7 V175.1 M862,164.5 H865.5 M865.5,171.5 H869" stroke="#ff1c04" stroke-width="1.15" fill="none"/>
<path d="M872.5,162.0 V173.0 M869,171.5 H872.5 M872.5,166.5 H876" stroke="#ffb545" stroke-width="1.15" fill="none"/>
<path d="M879.5,168.1 V182.7 M876,169.5 H879.5 M879.5,178.5 H883" stroke="#ff1c04" stroke-width="1.15" fill="none"/>
<path d="M887.5,179.0 V185.1 M884,183.5 H887.5 M887.5,180.5 H891" stroke="#ff1c04" stroke-width="1.15" fill="none"/>
<path d="M894.5,174.3 V187.9 M891,179.5 H894.5 M894.5,179.5 H898" stroke="#ffb545" stroke-width="1.15" fill="none"/>
<path d="M902.5,172.2 V187.9 M899,180.5 H902.5 M902.5,173.5 H906" stroke="#ffb545" stroke-width="1.15" fill="none"/>
<path d="M909.5,160.8 V173.7 M906,173.5 H909.5 M909.5,164.5 H913" stroke="#ffb545" stroke-width="1.15" fill="none"/>
<path d="M916.5,161.1 V173.0 M913,166.5 H916.5 M916.5,169.5 H920" stroke="#ff1c04" stroke-width="1.15" fill="none"/>
<path d="M924.5,162.9 V169.0 M921,167.5 H924.5 M924.5,164.5 H928" stroke="#ffb545" stroke-width="1.15" fill="none"/>
<path d="M931.5,161.1 V168.1 M928,164.5 H931.5 M931.5,164.5 H935" stroke="#ffb545" stroke-width="1.15" fill="none"/>
<path d="M939.5,141.9 V157.0 M936,156.5 H939.5 M939.5,143.5 H943" stroke="#ffb545" stroke-width="1.15" fill="none"/>
<path d="M946.5,134.0 V148.9 M943,148.5 H946.5 M946.5,136.5 H950" stroke="#ffb545" stroke-width="1.15" fill="none"/>
<path d="M953.5,123.0 V140.0 M950,136.5 H953.5 M953.5,125.5 H957" stroke="#ffb545" stroke-width="1.15" fill="none"/>
<path d="M961.5,120.7 V133.8 M958,129.5 H961.5 M961.5,122.5 H965" stroke="#ffb545" stroke-width="1.15" fill="none"/>
<path d="M968.5,111.1 V124.2 M965,122.5 H968.5 M968.5,112.5 H972" stroke="#ffb545" stroke-width="1.15" fill="none"/>
<path d="M976.5,96.0 V111.1 M973,110.5 H976.5 M976.5,97.5 H980" stroke="#ffb545" stroke-width="1.15" fill="none"/>
<path d="M983.5,81.2 V97.8 M980,97.5 H983.5 M983.5,81.5 H987" stroke="#ffb545" stroke-width="1.15" fill="none"/>
<path d="M0.0,364.0 L1.3,363.6 L13.5,359.2 L21.6,354.5 L35.7,349.1 L43.1,344.7 L51.2,342.0 L64.7,333.9 L72.8,330.9 L80.9,326.5 L94.3,322.9 L107.8,320.8 L120.0,318.6 L133.5,315.6 L147.0,313.2 L170.0,312.0 L187.4,308.5 L199.5,307.0 L213.0,302.4 L228.5,293.6 L236.3,291.3 L250.5,290.0 L260.0,290.4 L273.7,291.5 L295.6,289.0 L310.5,286.4 L324.8,281.0 L339.7,275.7 L347.6,272.4 L354.6,267.8 L361.6,264.8 L376.0,259.0 L391.5,256.5 L400.0,253.1 L413.7,250.0 L428.6,248.6 L465.4,248.8 L480.3,245.6 L502.2,242.7 L517.6,239.7 L539.5,233.0 L561.4,224.8 L576.3,219.0 L591.6,214.8 L613.5,205.7 L628.3,199.9 L643.2,192.9 L657.6,186.7 L672.5,180.6 L687.4,175.9 L702.3,173.8 L717.5,172.3 L739.4,171.1 L754.3,169.4 L768.7,167.6 L784.1,165.9 L798.5,162.4 L805.7,160.1 L820.6,158.0 L835.4,155.8 L850.2,152.6 L872.6,150.6 L902.4,150.3 L916.7,150.3 L924.1,151.5 L946.5,151.5 L961.4,148.9 L976.0,146.6 L983.0,145.8" fill="none" stroke="#f58c4a" stroke-width="1.25"/>
<path d="M0.0,351.0 L6.2,347.1 L13.6,341.8 L21.0,333.1 L28.4,329.9 L35.8,326.0 L43.2,320.8 L50.6,316.6 L58.0,311.6 L65.4,301.4 L72.8,291.3 L80.2,280.8 L87.6,273.4 L95.0,267.3 L102.4,269.7 L109.8,269.1 L117.2,267.1 L124.6,266.9 L132.0,267.0 L139.4,267.0 L146.8,266.3 L154.2,268.7 L161.6,271.7 L169.0,273.5 L176.4,273.7 L183.8,273.7 L191.2,273.5 L198.6,275.2 L206.0,275.8 L213.4,275.3 L220.8,275.3 L228.2,276.1 L235.6,278.0 L243.0,279.3 L250.4,280.6 L257.8,283.5 L265.2,285.8 L272.6,287.2 L280.0,288.3 L287.4,289.7 L294.8,290.6 L302.2,290.1 L309.6,289.5 L317.0,286.0 L324.4,279.2 L331.8,273.1 L339.2,267.3 L346.6,262.2 L354.0,253.0 L361.4,244.4 L368.8,238.7 L376.2,233.4 L383.6,230.9 L391.0,228.1 L398.4,222.4 L405.8,218.0 L413.2,215.2 L420.6,214.8 L428.0,213.4 L435.4,212.0 L442.8,210.7 L450.2,208.6 L457.6,209.4 L465.0,210.4 L472.4,210.6 L479.8,210.5 L487.2,210.6 L494.6,210.6 L502.0,210.1 L509.4,209.2 L516.8,207.2 L524.2,205.3 L531.6,201.6 L539.0,197.0 L546.4,192.4 L553.8,187.2 L561.2,183.1 L568.6,179.8 L576.0,176.4 L583.4,174.7 L590.8,174.0 L598.2,171.9 L605.6,169.9 L613.0,165.7 L620.4,163.3 L627.8,161.7 L635.2,159.7 L642.6,158.2 L650.0,157.4 L657.4,156.6 L664.8,156.0 L672.2,154.6 L679.6,154.2 L687.0,154.1 L694.4,153.8 L701.8,153.2 L709.2,153.7 L716.6,154.8 L724.0,155.7 L731.4,156.7 L738.8,157.9 L746.2,158.1 L753.6,157.9 L761.0,158.3 L768.4,154.6 L775.8,151.4 L783.2,148.7 L790.6,145.4 L798.0,142.4 L805.4,139.7 L812.8,138.0 L820.2,138.3 L827.6,139.6 L835.0,140.3 L842.4,141.5 L849.8,142.8 L857.2,144.3 L864.6,146.9 L872.0,148.7 L879.4,151.6 L886.8,154.5 L894.2,157.0 L901.6,158.6 L909.0,159.2 L916.4,160.1 L923.8,160.4 L931.2,160.5 L938.6,158.8 L946.0,156.4 L953.4,153.3 L960.8,150.2 L968.2,146.4 L975.6,141.7 L983.0,136.0" fill="none" stroke="#8cc6ff" stroke-width="3.3" stroke-linejoin="round"/>
</g>
<rect x="0" y="532.3" width="1126" height="4.5" fill="#4d4d4d"/>
<rect x="557" y="532.8" width="14" height="0.9" fill="#a8a8a8"/><rect x="557" y="535" width="14" height="0.9" fill="#a8a8a8"/>
<g clip-path="url(#rp)">
<path d="M20.0,589.5 L21.0,587.8 L21.5,589.5 Z" fill="#8a5252"/>
<path d="M65.0,589.5 L65.4,588.7 L72.8,586.7 L80.2,584.0 L83.0,589.5 Z" fill="#8a5252"/>
<path d="M318.0,589.5 L324.4,578.1 L331.8,578.1 L339.2,578.1 L346.6,580.2 L354.0,568.1 L361.4,568.1 L367.8,589.5 Z" fill="#8a5252"/>
<path d="M531.6,589.5 L539.0,582.8 L546.4,579.4 L553.8,576.0 L561.2,589.5 Z" fill="#8a5252"/>
<path d="M951.8,589.5 L953.4,587.8 L960.8,585.6 L968.2,580.5 L975.6,574.9 L983.0,569.6 L983.0,589.5 Z" fill="#8a5252"/>
<line x1="0" y1="589.5" x2="1072" y2="589.5" stroke="#f01010" stroke-width="1.2"/>
<line x1="0" y1="663.5" x2="1072" y2="663.5" stroke="#10c818" stroke-width="1.2"/>
<path d="M-1.2,606.4 L6.2,605.9 L13.6,600.2 L21.0,587.8 L28.4,614.8 L35.8,611.8 L43.2,605.6 L50.6,609.8 L58.0,604.7 L65.4,588.7 L72.8,586.7 L80.2,584.0 L87.6,598.8 L95.0,601.8 L102.4,638.8 L109.8,630.9 L117.2,622.1 L124.6,628.8 L132.0,630.4 L139.4,630.4 L146.8,625.0 L154.2,639.8 L161.6,643.9 L169.0,636.3 L176.4,628.7 L183.8,628.0 L191.2,627.2 L198.6,638.0 L206.0,630.5 L213.4,626.7 L220.8,624.6 L228.2,633.9 L235.6,643.0 L243.0,637.1 L250.4,638.8 L257.8,652.0 L265.2,646.9 L272.6,638.0 L280.0,634.8 L287.4,641.3 L294.8,636.3 L302.2,622.1 L309.6,616.0 L317.0,591.2 L324.4,578.1 L331.8,578.1 L339.2,578.1 L346.6,580.2 L354.0,568.1 L361.4,568.1 L368.8,592.9 L376.2,591.7 L383.6,614.8 L391.0,613.2 L398.4,595.8 L405.8,604.2 L413.2,614.5 L420.6,628.8 L428.0,625.0 L435.4,620.7 L442.8,621.9 L450.2,614.8 L457.6,617.9 L465.0,641.0 L472.4,634.8 L479.8,633.4 L487.2,633.4 L494.6,628.7 L502.0,628.3 L509.4,614.8 L516.8,604.7 L524.2,603.0 L531.6,589.5 L539.0,582.8 L546.4,579.4 L553.8,576.0 L561.2,589.5 L568.6,596.8 L576.0,594.9 L583.4,614.0 L590.8,625.0 L598.2,610.6 L605.6,608.9 L613.0,593.2 L620.4,608.9 L627.8,616.9 L635.2,611.0 L642.6,614.8 L650.0,621.9 L657.4,620.7 L664.8,622.8 L672.2,611.0 L679.6,625.8 L687.0,632.9 L694.4,630.0 L701.8,622.4 L709.2,635.9 L716.6,644.9 L724.0,630.0 L731.4,643.5 L738.8,643.5 L746.2,632.0 L753.6,627.2 L761.0,632.9 L768.4,592.9 L775.8,593.7 L783.2,598.0 L790.6,592.9 L798.0,591.7 L805.4,592.6 L812.8,607.2 L820.2,634.2 L827.6,644.9 L835.0,637.1 L842.4,641.0 L849.8,644.4 L857.2,647.7 L864.6,657.9 L872.0,650.3 L879.4,660.0 L886.8,661.2 L894.2,659.0 L901.6,645.2 L909.0,630.3 L916.4,636.7 L923.8,627.4 L931.2,622.7 L938.6,602.1 L946.0,595.7 L953.4,587.8 L960.8,585.6 L968.2,580.5 L975.6,574.9 L983.0,569.6" fill="none" stroke="#e0e0e0" stroke-width="1.15" stroke-linejoin="round"/>
</g>
<rect x="1073" y="589" width="3.5" height="1" fill="#fff"/><rect x="1073" y="663" width="3.5" height="1" fill="#fff"/>
<rect x="0" y="23" width="1.4" height="655" fill="#ffa028"/>
<rect x="1072" y="23" width="1.3" height="694" fill="#fff"/>
<rect x="0" y="715.8" width="1073.3" height="1.35" fill="#fff"/>
<path d="M1073,169.7 L1080,172.5 L1073,175.3 Z" fill="#fff"/>
<text x="1082.2" y="177.8" font-size="13.8" fill="#fff" text-anchor="start" textLength="31.5" lengthAdjust="spacingAndGlyphs" >2.600</text>
<path d="M1073,268.7 L1080,271.5 L1073,274.3 Z" fill="#fff"/>
<text x="1082.2" y="276.8" font-size="13.8" fill="#fff" text-anchor="start" textLength="31.5" lengthAdjust="spacingAndGlyphs" >2.400</text>
<path d="M1073,366.7 L1080,369.5 L1073,372.3 Z" fill="#fff"/>
<text x="1082.2" y="374.8" font-size="13.8" fill="#fff" text-anchor="start" textLength="31.5" lengthAdjust="spacingAndGlyphs" >2.200</text>
<path d="M1073,465.7 L1080,468.5 L1073,471.3 Z" fill="#fff"/>
<text x="1082.2" y="473.8" font-size="13.8" fill="#fff" text-anchor="start" textLength="31.5" lengthAdjust="spacingAndGlyphs" >2.000</text>
<rect x="1073" y="25" width="3.5" height="1" fill="#fff"/>
<rect x="1073" y="123" width="3.5" height="1" fill="#fff"/>
<rect x="1073" y="221" width="3.5" height="1" fill="#fff"/>
<rect x="1073" y="320" width="3.5" height="1" fill="#fff"/>
<rect x="1073" y="418" width="3.5" height="1" fill="#fff"/>
<rect x="1073" y="517" width="3.5" height="1" fill="#fff"/>
<path d="M1073,549.7 L1080.5,552.5 L1073,555.3 Z" fill="#fff"/>
<text x="1082.2" y="557.8" font-size="13.8" fill="#fff" text-anchor="start" textLength="20.700000000000003" lengthAdjust="spacingAndGlyphs" >100</text>
<path d="M1073,623.7 L1080.5,626.5 L1073,629.3 Z" fill="#fff"/>
<text x="1082.2" y="631.8" font-size="13.8" fill="#fff" text-anchor="start" textLength="13.8" lengthAdjust="spacingAndGlyphs" >50</text>
<path d="M1073,697.7 L1080.5,700.5 L1073,703.3 Z" fill="#fff"/>
<text x="1082.2" y="705.8" font-size="13.8" fill="#fff" text-anchor="start" textLength="6.9" lengthAdjust="spacingAndGlyphs" >0</text>
<rect x="43" y="716" width="1.3" height="4" fill="#fff"/>
<text x="43.3" y="730.4" font-size="13.5" fill="#fff" text-anchor="middle" textLength="41" lengthAdjust="spacingAndGlyphs" >May 15</text>
<rect x="125" y="716" width="1.3" height="4" fill="#fff"/>
<text x="125.3" y="730.4" font-size="13.5" fill="#fff" text-anchor="middle" textLength="41" lengthAdjust="spacingAndGlyphs" >May 30</text>
<rect x="206" y="716" width="1.3" height="4" fill="#fff"/>
<text x="206.3" y="730.4" font-size="13.5" fill="#fff" text-anchor="middle" textLength="39.3" lengthAdjust="spacingAndGlyphs" >Jun 16</text>
<rect x="280" y="716" width="1.3" height="4" fill="#fff"/>
<text x="280.3" y="730.4" font-size="13.5" fill="#fff" text-anchor="middle" textLength="39.3" lengthAdjust="spacingAndGlyphs" >Jun 30</text>
<rect x="361" y="716" width="1.3" height="4" fill="#fff"/>
<text x="361.3" y="730.4" font-size="13.5" fill="#fff" text-anchor="middle" textLength="36.3" lengthAdjust="spacingAndGlyphs" >Jul 15</text>
<rect x="443" y="716" width="1.3" height="4" fill="#fff"/>
<text x="443.3" y="730.4" font-size="13.5" fill="#fff" text-anchor="middle" textLength="36.3" lengthAdjust="spacingAndGlyphs" >Jul 31</text>
<rect x="517" y="716" width="1.3" height="4" fill="#fff"/>
<text x="517.3" y="730.4" font-size="13.5" fill="#fff" text-anchor="middle" textLength="40" lengthAdjust="spacingAndGlyphs" >Aug 15</text>
<rect x="591" y="716" width="1.3" height="4" fill="#fff"/>
<text x="591.3" y="730.4" font-size="13.5" fill="#fff" text-anchor="middle" textLength="40" lengthAdjust="spacingAndGlyphs" >Aug 29</text>
<rect x="672" y="716" width="1.3" height="4" fill="#fff"/>
<text x="672.3" y="730.4" font-size="13.5" fill="#fff" text-anchor="middle" textLength="39.3" lengthAdjust="spacingAndGlyphs" >Sep 16</text>
<rect x="739" y="716" width="1.3" height="4" fill="#fff"/>
<text x="739.3" y="730.4" font-size="13.5" fill="#fff" text-anchor="middle" textLength="39.3" lengthAdjust="spacingAndGlyphs" >Sep 30</text>
<rect x="813" y="716" width="1.3" height="4" fill="#fff"/>
<text x="813.3" y="730.4" font-size="13.5" fill="#fff" text-anchor="middle" textLength="39.3" lengthAdjust="spacingAndGlyphs" >Oct 15</text>
<rect x="902" y="716" width="1.3" height="4" fill="#fff"/>
<text x="902.3" y="730.4" font-size="13.5" fill="#fff" text-anchor="middle" textLength="39.3" lengthAdjust="spacingAndGlyphs" >Oct 31</text>
<rect x="968" y="716" width="1.3" height="4" fill="#fff"/>
<text x="968.3" y="730.4" font-size="13.5" fill="#fff" text-anchor="middle" textLength="40.8" lengthAdjust="spacingAndGlyphs" >Nov 14</text>
<rect x="1042" y="716" width="1.3" height="4" fill="#fff"/>
<text x="1042.3" y="730.4" font-size="13.5" fill="#fff" text-anchor="middle" textLength="40.8" lengthAdjust="spacingAndGlyphs" >Nov 28</text>
<rect x="80" y="716" width="1.3" height="4" fill="#fff"/>
<rect x="169" y="716" width="1.3" height="4" fill="#fff"/>
<rect x="243" y="716" width="1.3" height="4" fill="#fff"/>
<rect x="324" y="716" width="1.3" height="4" fill="#fff"/>
<rect x="398" y="716" width="1.3" height="4" fill="#fff"/>
<rect x="487" y="716" width="1.3" height="4" fill="#fff"/>
<rect x="554" y="716" width="1.3" height="4" fill="#fff"/>
<rect x="635" y="716" width="1.3" height="4" fill="#fff"/>
<rect x="702" y="716" width="1.3" height="4" fill="#fff"/>
<rect x="783" y="716" width="1.3" height="4" fill="#fff"/>
<rect x="857" y="716" width="1.3" height="4" fill="#fff"/>
<rect x="931" y="716" width="1.3" height="4" fill="#fff"/>
<rect x="1005" y="716" width="1.3" height="4" fill="#fff"/>
<text x="536.5" y="746" font-size="13.5" fill="#fff" text-anchor="middle" >2025</text>
<rect x="0" y="736.2" width="56.8" height="6" fill="#c4f6ff"/>
<text x="1.2" y="747.8" font-size="13.5" fill="#101830" text-anchor="start" textLength="54" lengthAdjust="spacingAndGlyphs" >05/12/25</text>
<rect x="1073" y="52" width="33" height="14" fill="#c4f6ff"/>
<text x="1074.5" y="64" font-size="13.5" fill="#101830" text-anchor="start" textLength="30.5" lengthAdjust="spacingAndGlyphs" >2.831</text>
<path d="M1072.5,146 L1078.5,137.0 H1126 V155.0 H1078.5 Z" fill="#ff8a48"/>
<text x="1081.3" y="150.9" font-size="13.5" fill="#1a0a00" text-anchor="start" textLength="31.5" lengthAdjust="spacingAndGlyphs" >2.653</text>
<path d="M1072.5,264.5 L1078.5,256.0 H1126 V273.0 H1078.5 Z" fill="#ffffff"/>
<text x="1081.3" y="269.4" font-size="13.5" fill="#0a0a14" text-anchor="start" textLength="31.5" lengthAdjust="spacingAndGlyphs" >2.414</text>
<path d="M1073.5,264.5 L1079,256 H1126 M1073.5,264.5 L1079,273 H1126" fill="none" stroke="#000" stroke-width="1"/>
<path d="M1072.5,136 L1078.5,125.0 H1126 V147.0 H1078.5 Z" fill="#3a9dff"/>
<path d="M1073.2,136 L1079,125.7 H1126 M1073.2,136 L1079,146.3 H1126" fill="none" stroke="#9ad0ff" stroke-width="1.5"/>
<text x="1081.3" y="140.9" font-size="13.5" fill="#080828" text-anchor="start" textLength="31.5" lengthAdjust="spacingAndGlyphs" >2.673</text>
<path d="M1072.5,81 L1078.5,70.0 H1126 V92.0 H1078.5 Z" fill="#ffb550"/>
<path d="M1073.2,81 L1079,70.7 H1126 M1073.2,81 L1079,91.3 H1126" fill="none" stroke="#ffdfa6" stroke-width="1.5"/>
<text x="1081.3" y="85.9" font-size="13.5" fill="#1a1008" text-anchor="start" textLength="31.5" lengthAdjust="spacingAndGlyphs" >2.785</text>
<path d="M1074,569.5 L1079.5,561 H1126 V578 H1079.5 Z" fill="#fff"/>
<text x="1081" y="574.5" font-size="13.5" fill="#0a0a14" text-anchor="start" textLength="47" lengthAdjust="spacingAndGlyphs" >88.1882</text>
<rect x="0" y="0" width="1126" height="3" fill="#000"/>
<rect x="53" y="0" width="19" height="2" fill="#ffa028"/>
<rect x="73" y="0" width="74" height="2" fill="#ffa028"/>
<rect x="147.5" y="0" width="13.5" height="2" fill="#555"/>
<rect x="228.5" y="0" width="31" height="2" fill="#ffa028"/>
<rect x="323" y="0" width="41" height="2" fill="#ffa028"/>
<rect x="33" y="0" width="5" height="1.5" fill="#ffa028"/><rect x="51.5" y="0" width="1" height="2" fill="#c01010"/>
<rect x="0" y="3" width="1126" height="20" fill="url(#tex)"/>
<rect x="0" y="3" width="530" height="20" fill="#0d0d0d"/>
<rect x="956" y="3" width="170" height="20" fill="#0d0d0d"/>
<rect x="0" y="3" width="36" height="20" fill="#1f1f1f"/>
<rect x="37" y="3" width="35" height="20" fill="#1f1f1f"/>
<rect x="74" y="3" width="34" height="20" fill="#1f1f1f"/>
<rect x="110" y="3" width="35" height="20" fill="#1f1f1f"/>
<rect x="147" y="3" width="42" height="20" fill="#1f1f1f"/>
<rect x="190" y="3" width="34" height="20" fill="#0b5bc4"/>
<rect x="226" y="3" width="34" height="20" fill="#1f1f1f"/>
<rect x="262" y="3" width="42" height="20" fill="#1f1f1f"/>
<rect x="306" y="3" width="63" height="20" fill="#1f1f1f"/>
<rect x="373" y="3" width="24" height="20" fill="#1f1f1f"/>
<rect x="400" y="3" width="26" height="20" fill="#0b5bc4"/>
<rect x="432" y="3" width="24" height="20" fill="#1f1f1f"/>
<rect x="461" y="3" width="68" height="20" fill="#1f1f1f"/>
<text x="18" y="17.8" font-size="15.6" fill="#fff" text-anchor="middle" textLength="15.5" lengthAdjust="spacingAndGlyphs" >1D</text>
<text x="54" y="17.8" font-size="15.6" fill="#fff" text-anchor="middle" textLength="16" lengthAdjust="spacingAndGlyphs" >3D</text>
<text x="90" y="17.8" font-size="15.6" fill="#fff" text-anchor="middle" textLength="15.5" lengthAdjust="spacingAndGlyphs" >1M</text>
<text x="127" y="17.8" font-size="15.6" fill="#fff" text-anchor="middle" textLength="18" lengthAdjust="spacingAndGlyphs" >6M</text>
<text x="167" y="17.8" font-size="15.6" fill="#fff" text-anchor="middle" textLength="24.5" lengthAdjust="spacingAndGlyphs" >YTD</text>
<text x="208" y="17.8" font-size="15.6" fill="#fff" text-anchor="middle" textLength="16" lengthAdjust="spacingAndGlyphs" >1Y</text>
<text x="242.5" y="17.8" font-size="15.6" fill="#fff" text-anchor="middle" textLength="16" lengthAdjust="spacingAndGlyphs" >5Y</text>
<text x="282" y="17.8" font-size="15.6" fill="#fff" text-anchor="middle" textLength="24" lengthAdjust="spacingAndGlyphs" >Max</text>
<text x="311.5" y="17.8" font-size="15.6" fill="#fff" text-anchor="start" textLength="31.5" lengthAdjust="spacingAndGlyphs" >Daily</text>
<path d="M351.5,8 H361.5 L356.5,18 Z" fill="#fff"/>
<text x="495.5" y="17.8" font-size="15.6" fill="#fff" text-anchor="middle" textLength="35" lengthAdjust="spacingAndGlyphs" >Table</text>
<path d="M380.5,6 V19.5 H394.5" stroke="#ddd" stroke-width="1.3" fill="none"/><path d="M382,16 L386,11 L389,13.5 L394,8" stroke="#ddd" stroke-width="1.3" fill="none"/>
<path d="M408.5,6 V19 M405,15.5 H408.5 M408.5,9.5 H411 M416.5,6 V19 M413,16.5 H416.5 M416.5,8.5 H419.5" stroke="#e8f0ff" stroke-width="1.4" fill="none"/>
<path d="M443,11.5 H449 L446,15.5 Z" fill="#fff"/>
<rect x="772.5" y="4" width="183" height="17.5" fill="#ffa028" stroke="#8a5208" stroke-width="1"/>
<text x="776" y="17.8" font-size="15.6" fill="#c06c08" text-anchor="start" textLength="62" lengthAdjust="spacingAndGlyphs" >Add Data</text>
<rect x="958" y="3" width="20" height="20" fill="#1f1f1f"/><rect x="980" y="3" width="94" height="20" fill="#1f1f1f"/><rect x="1076" y="3" width="26" height="20" fill="#1f1f1f"/><rect x="1103.5" y="3" width="23" height="20" fill="#1f1f1f"/>
<path d="M967,8 L963,13 L967,18 M973,8 L969,13 L973,18" stroke="#fff" stroke-width="2.1" fill="none"/>
<path d="M986,19 L987.5,15 L996,6.5 L998.5,9 L990,17.5 Z" fill="#fff"/>
<text x="1005.8" y="17.8" font-size="15.6" fill="#fff" text-anchor="start" textLength="63" lengthAdjust="spacingAndGlyphs" >Edit Chart</text>
<path d="M1082.5,8.7 H1092 M1082.5,8.7 V16.3 H1086 M1084,11.3 H1090 M1084,13.6 H1088" stroke="#8c8c8c" stroke-width="1.2" fill="none"/><path d="M1084.6,17.4 L1086,14.8 L1092.6,8 L1094.4,9.6 L1087.6,16.6 Z" fill="#fff"/><path d="M1089.7,17.7 H1095.2" stroke="#fff" stroke-width="1.3"/>
<g transform="translate(1115.5,12.7)"><rect x="-1.41" y="-7.40" width="2.81" height="14.80" fill="#d6d6d6" transform="rotate(0)"/><rect x="-1.41" y="-7.40" width="2.81" height="14.80" fill="#d6d6d6" transform="rotate(45)"/><rect x="-1.41" y="-7.40" width="2.81" height="14.80" fill="#d6d6d6" transform="rotate(90)"/><rect x="-1.41" y="-7.40" width="2.81" height="14.80" fill="#d6d6d6" transform="rotate(135)"/><circle r="4.88" fill="#d6d6d6"/><circle r="2.29" fill="#1f1f1f"/></g>
<rect x="3.5" y="26.5" width="546" height="46.5" rx="4" fill="#151515" stroke="#2c2f32" stroke-width="1"/>
<path d="M10.5,38 H16.5 V44.5 H10.5 Z M12,41.3 H15" stroke="#8a8a80" stroke-width="1" fill="none"/><path d="M13.5,45 V65.8 M13.5,58.5 H17" stroke="#8a8a80" stroke-width="1" fill="none"/>
<path d="M4,68 L8,72 M4,65 L10,71.5 M4,62 L12,71" stroke="#777" stroke-width="1"/>
<rect x="20" y="36.5" width="12" height="11.5" fill="#ffd08c"/><rect x="20" y="52.5" width="12" height="11.5" fill="#8cc6ff"/>
<rect x="36.2" y="34" width="162.6" height="17" fill="#fff"/><rect x="36.2" y="50.2" width="196.4" height="16" fill="#fff"/>
<text x="36.9" y="47.5" font-size="13.5" fill="#0c0c24" text-anchor="start" textLength="43.7" lengthAdjust="spacingAndGlyphs" stroke="#0c0c24" stroke-width="0.3">GJGB20</text>
<text x="86.8" y="47.5" font-size="13.5" fill="#0c0c24" text-anchor="start" textLength="31.6" lengthAdjust="spacingAndGlyphs" stroke="#0c0c24" stroke-width="0.3">Index</text>
<text x="127" y="47.5" font-size="13.5" fill="#0c0c24" text-anchor="start" textLength="4.7" lengthAdjust="spacingAndGlyphs" stroke="#0c0c24" stroke-width="0.3">-</text>
<text x="136.8" y="47.5" font-size="13.5" fill="#0c0c24" text-anchor="start" textLength="24.2" lengthAdjust="spacingAndGlyphs" stroke="#0c0c24" stroke-width="0.3">Last</text>
<text x="167.9" y="47.5" font-size="13.5" fill="#0c0c24" text-anchor="start" textLength="29.7" lengthAdjust="spacingAndGlyphs" stroke="#0c0c24" stroke-width="0.3">Price</text>
<text x="36.9" y="63.5" font-size="13.5" fill="#0c0c24" text-anchor="start" textLength="36.4" lengthAdjust="spacingAndGlyphs" stroke="#0c0c24" stroke-width="0.3">EMAVG</text>
<text x="80" y="63.5" font-size="13.5" fill="#0c0c24" text-anchor="start" textLength="25" lengthAdjust="spacingAndGlyphs" stroke="#0c0c24" stroke-width="0.3">(20)</text>
<text x="117.5" y="63.5" font-size="13.5" fill="#0c0c24" text-anchor="start" textLength="12.0" lengthAdjust="spacingAndGlyphs" stroke="#0c0c24" stroke-width="0.3">on</text>
<text x="136.2" y="63.5" font-size="13.5" fill="#0c0c24" text-anchor="start" textLength="31.0" lengthAdjust="spacingAndGlyphs" stroke="#0c0c24" stroke-width="0.3">Close</text>
<text x="174.3" y="63.5" font-size="13.5" fill="#0c0c24" text-anchor="start" textLength="56.7" lengthAdjust="spacingAndGlyphs" stroke="#0c0c24" stroke-width="0.3">(GJGB20)</text>
<text x="238.5" y="47.5" font-size="13.5" fill="#fff" text-anchor="start" textLength="31.5" lengthAdjust="spacingAndGlyphs" >2.785</text>
<text x="238.5" y="63.5" font-size="13.5" fill="#fff" text-anchor="start" textLength="31.5" lengthAdjust="spacingAndGlyphs" >2.673</text>
<rect x="284" y="36.5" width="12" height="11.5" fill="#ff8540"/><rect x="284" y="52.5" width="12" height="11.5" fill="#fff"/>
<text x="300.6" y="47.5" font-size="13.5" fill="#fff" text-anchor="start" textLength="36.6" lengthAdjust="spacingAndGlyphs" stroke="#fff" stroke-width="0.3">SMAVG</text>
<text x="343.8" y="47.5" font-size="13.5" fill="#fff" text-anchor="start" textLength="25.6" lengthAdjust="spacingAndGlyphs" stroke="#fff" stroke-width="0.3">(50)</text>
<text x="381.8" y="47.5" font-size="13.5" fill="#fff" text-anchor="start" textLength="12.0" lengthAdjust="spacingAndGlyphs" stroke="#fff" stroke-width="0.3">on</text>
<text x="400.7" y="47.5" font-size="13.5" fill="#fff" text-anchor="start" textLength="30.8" lengthAdjust="spacingAndGlyphs" stroke="#fff" stroke-width="0.3">Close</text>
<text x="438.2" y="47.5" font-size="13.5" fill="#fff" text-anchor="start" textLength="56.6" lengthAdjust="spacingAndGlyphs" stroke="#fff" stroke-width="0.3">(GJGB20)</text>
<text x="300.6" y="63.5" font-size="13.5" fill="#fff" text-anchor="start" textLength="36.6" lengthAdjust="spacingAndGlyphs" stroke="#fff" stroke-width="0.3">SMAVG</text>
<text x="343.8" y="63.5" font-size="13.5" fill="#fff" text-anchor="start" textLength="32.9" lengthAdjust="spacingAndGlyphs" stroke="#fff" stroke-width="0.3">(200)</text>
<text x="388.4" y="63.5" font-size="13.5" fill="#fff" text-anchor="start" textLength="12.1" lengthAdjust="spacingAndGlyphs" stroke="#fff" stroke-width="0.3">on</text>
<text x="407.3" y="63.5" font-size="13.5" fill="#fff" text-anchor="start" textLength="30.9" lengthAdjust="spacingAndGlyphs" stroke="#fff" stroke-width="0.3">Close</text>
<text x="444.9" y="63.5" font-size="13.5" fill="#fff" text-anchor="start" textLength="56.6" lengthAdjust="spacingAndGlyphs" stroke="#fff" stroke-width="0.3">(GJGB20)</text>
<text x="509.5" y="47.5" font-size="13.5" fill="#fff" text-anchor="start" textLength="31" lengthAdjust="spacingAndGlyphs" >2.653</text>
<text x="509.5" y="63.5" font-size="13.5" fill="#fff" text-anchor="start" textLength="31" lengthAdjust="spacingAndGlyphs" >2.414</text>
<g transform="translate(10,84)"><rect x="-1.18" y="-6.20" width="2.36" height="12.40" fill="#9a9a9a" transform="rotate(0)"/><rect x="-1.18" y="-6.20" width="2.36" height="12.40" fill="#9a9a9a" transform="rotate(45)"/><rect x="-1.18" y="-6.20" width="2.36" height="12.40" fill="#9a9a9a" transform="rotate(90)"/><rect x="-1.18" y="-6.20" width="2.36" height="12.40" fill="#9a9a9a" transform="rotate(135)"/><circle r="4.09" fill="#9a9a9a"/><circle r="1.92" fill="#363b40"/></g>
<path d="M497.5,89.5 L502,85" stroke="#9a9a9a" stroke-width="1.2"/><path d="M499.5,83.5 L503.8,87.8 L504.5,85.5 L508.4,81.6 L505.6,78.8 L501.7,82.7 Z" fill="#9a9a9a"/>
<path d="M526.3,79.7 L520,86" stroke="#9a9a9a" stroke-width="1.4"/><path d="M517.7,82.5 V88.4 H523.8 Z" fill="#9a9a9a"/>
<path d="M537,80 L545,88 M545,80 L537,88" stroke="#a0a0a0" stroke-width="1.4" fill="none"/>
<rect x="625" y="23.5" width="273" height="21.5" fill="#262b33" stroke="#0a0c0e" stroke-width="1" fill-opacity="0.85"/>
<rect x="690" y="24" width="81" height="20.5" fill="#1e3a5c"/>
<rect x="834.5" y="45" width="63.5" height="21.5" fill="#2a2b2e" stroke="#0a0c0e" stroke-width="1" fill-opacity="0.88"/>
<rect x="771" y="24" width="1" height="20.5" fill="#0c0e10"/>
<rect x="834.5" y="24" width="1" height="20.5" fill="#0c0e10"/>
<text x="652" y="37.8" font-size="13.5" fill="#cdd6e0" text-anchor="start" textLength="33" lengthAdjust="spacingAndGlyphs" >Track</text>
<text x="717" y="37.8" font-size="13.5" fill="#dfe8f2" text-anchor="start" textLength="51" lengthAdjust="spacingAndGlyphs" >Annotate</text>
<text x="798.5" y="37.8" font-size="13.5" fill="#cdd6e0" text-anchor="start" textLength="30" lengthAdjust="spacingAndGlyphs" >News</text>
<text x="861" y="37.8" font-size="13.5" fill="#cdd6e0" text-anchor="start" textLength="32" lengthAdjust="spacingAndGlyphs" >Zoom</text>
<text x="861" y="59.8" font-size="13.5" fill="#cdd6e0" text-anchor="start" textLength="32" lengthAdjust="spacingAndGlyphs" >Reset</text>
<g stroke="#8a929a" stroke-width="1" fill="none"><circle cx="638.5" cy="33.5" r="3.2"/><path d="M638.5,28 V39 M633,33.5 H644"/></g>
<path d="M700,37 L706,31 L707.5,32.5 L701.5,38 Z M699,39.5 H708" stroke="#8a929a" stroke-width="1" fill="#8a929a"/>
<rect x="780.7" y="29" width="4.2" height="3.2" fill="#7a828a"/><g stroke="#7a828a" stroke-width="1"><path d="M786,29.5 H790.5 M786,31.5 H790.5 M780.7,33.9 H790.5 M780.7,35.9 H790.5 M780.7,37.9 H790.5"/></g>
<g stroke="#8a929a" stroke-width="1.2" fill="none"><circle cx="846.5" cy="32" r="3.6"/><path d="M849.5,35 L853.5,39"/></g>
<circle cx="848" cy="55.5" r="3.6" stroke="#fff" stroke-width="2.4" fill="none"/>
<rect x="1055" y="25.7" width="14" height="14.4" rx="2" fill="#707070" stroke="#14181c" stroke-width="1"/><path d="M1058.6,30.6 L1062,27.8 L1065.4,30.6 Z M1058.6,35.4 L1062,38.2 L1065.4,35.4 Z" fill="#b4b4b4"/><path d="M1056.3,32.2 H1067.7 M1056.3,33.9 H1067.7" stroke="#555" stroke-width="0.9"/>
<rect x="11" y="550" width="12" height="12" fill="#fff"/>
<text x="27.6" y="561.5" font-size="13.5" fill="#fff" text-anchor="start" textLength="21.4" lengthAdjust="spacingAndGlyphs" stroke="#fff" stroke-width="0.3">RSI</text>
<text x="52.7" y="561.5" font-size="13.5" fill="#fff" text-anchor="start" textLength="19.3" lengthAdjust="spacingAndGlyphs" stroke="#fff" stroke-width="0.3">(8)</text>
<text x="82.9" y="561.5" font-size="13.5" fill="#fff" text-anchor="start" textLength="13.1" lengthAdjust="spacingAndGlyphs" stroke="#fff" stroke-width="0.3">on</text>
<text x="102.6" y="561.5" font-size="13.5" fill="#fff" text-anchor="start" textLength="30.4" lengthAdjust="spacingAndGlyphs" stroke="#fff" stroke-width="0.3">Close</text>
<text x="140.3" y="561.5" font-size="13.5" fill="#fff" text-anchor="start" textLength="57.5" lengthAdjust="spacingAndGlyphs" stroke="#fff" stroke-width="0.3">(GJGB20)</text>
<text x="203.8" y="561.5" font-size="13.5" fill="#fff" text-anchor="start" textLength="45.6" lengthAdjust="spacingAndGlyphs" stroke="#fff" stroke-width="0.3">88.1882</text>
</svg></body></html>
